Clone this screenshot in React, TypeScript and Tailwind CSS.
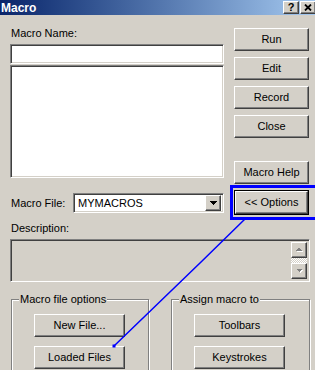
import React from "react";

const raised =
  "border border-t-white border-l-white border-r-[#404040] border-b-[#404040] shadow-[inset_-1px_-1px_0_#808080] bg-[#d4d0c8]";
const sunken =
  "border border-t-[#808080] border-l-[#808080] border-b-white border-r-white shadow-[inset_1px_1px_0_#404040,inset_-1px_-1px_0_#d4d0c8]";

function Btn({ label, className = "" }: { label: string; className?: string }) {
  return (
    <div className={`${raised} h-[23px] flex items-center justify-center ${className}`}>
      {label}
    </div>
  );
}

function UpArrow() {
  return (
    <svg width="9" height="6" viewBox="0 0 9 6" shapeRendering="crispEdges">
      <polygon points="1.5,5 8.5,5 5,1.5" fill="#ffffff" />
      <polygon points="0.5,4 7.5,4 4,0.5" fill="#808080" />
    </svg>
  );
}

function DownArrow() {
  return (
    <svg width="9" height="6" viewBox="0 0 9 6" shapeRendering="crispEdges">
      <polygon points="1.5,1.5 8.5,1.5 5,5" fill="#ffffff" />
      <polygon points="0.5,0.5 7.5,0.5 4,4" fill="#808080" />
    </svg>
  );
}

function Group({ title, a, b }: { title: string; a: string; b: string }) {
  return (
    <div className="border border-[#808080] shadow-[inset_1px_1px_0_#ffffff,1px_1px_0_#ffffff] h-[90px]">
      <div className="-mt-[7px] ml-[7px] px-[1px] w-fit bg-[#d4d0c8] leading-[13px]">{title}</div>
      <div className="pl-[22px] pt-[8px] flex flex-col gap-[9px]">
        <Btn label={a} className="w-[91px]" />
        <Btn label={b} className="w-[91px]" />
      </div>
    </div>
  );
}

export default function App() {
  return (
    <div className="relative w-[315px] h-[370px] overflow-hidden bg-[#d4d0c8] font-['Liberation_Sans',Arial,sans-serif] text-[11px] leading-[13px] text-black">
      {/* Title bar */}
      <div className="h-[15px] flex items-center bg-linear-to-r from-[#0a246a] to-[#a6caf0] pl-[1px]">
        <span className="text-white font-bold text-[12px] leading-none">Macro</span>
        <div className="ml-auto flex gap-[1px] -mr-[1px]">
          <div className={`${raised} w-[16px] h-[13px] flex items-center justify-center font-bold text-[11px] leading-none`}>?</div>
          <div className={`${raised} w-[16px] h-[13px] flex items-center justify-center`}>
            <svg width="8" height="7" viewBox="0 0 8 7">
              <path d="M1 0.5 L7 6.5 M7 0.5 L1 6.5" stroke="#000" strokeWidth="1.8" />
            </svg>
          </div>
        </div>
      </div>

      {/* Top section */}
      <div className="flex items-start pl-[10px]">
        <div className="w-[214px] pt-[12px]">
          <div className="pl-[1px] h-[13px]">Macro Name:</div>
          <div className={`${sunken} mt-[4px] h-[20px] bg-white`} />
          <div className={`${sunken} mt-[1px] h-[113px] bg-white`} />
          <div className="mt-[15px] flex items-center">
            <div className="w-[63px] pl-[1px]">Macro File:</div>
            <div className={`${sunken} w-[151px] h-[20px] bg-white flex items-center p-[2px]`}>
              <span className="flex-1 pl-[2px]">MYMACROS</span>
              <div className={`${raised} w-[16px] h-[16px] flex items-center justify-center`}>
                <svg width="7" height="4" viewBox="0 0 7 4" shapeRendering="crispEdges">
                  <polygon points="0,0 7,0 3.5,4" fill="#000" />
                </svg>
              </div>
            </div>
          </div>
        </div>
        <div className="ml-[10px] w-[75px] mt-[13px] flex flex-col">
          <Btn label="Run" />
          <Btn label="Edit" className="mt-[6px]" />
          <Btn label="Record" className="mt-[6px]" />
          <Btn label="Close" className="mt-[6px]" />
          <Btn label="Macro Help" className="mt-[23px]" />
          <div className="mt-[6px] border border-black">
            <Btn label="<< Options" className="h-[21px]" />
          </div>
        </div>
      </div>

      {/* Description */}
      <div className="mt-[7px] pl-[11px] h-[13px]">Description:</div>
      <div className={`${sunken} mt-[4px] ml-[10px] w-[300px] h-[43px] p-[2px] flex justify-end`}>
        <div className="w-[16px] flex flex-col">
          <div className={`${raised} h-[16px] flex items-center justify-center`}>
            <UpArrow />
          </div>
          <div className="flex-1 bg-[repeating-conic-gradient(#ffffff_0_25%,#d4d0c8_0_50%)] bg-[length:2px_2px]" />
          <div className={`${raised} h-[16px] flex items-center justify-center`}>
            <DownArrow />
          </div>
        </div>
      </div>

      {/* Groups */}
      <div className="mt-[17px] pl-[11px] flex gap-[22px]">
        <div className="w-[138px]">
          <Group title="Macro file options" a="New File..." b="Loaded Files" />
        </div>
        <div className="w-[139px]">
          <Group title="Assign macro to" a="Toolbars" b="Keystrokes" />
        </div>
      </div>

      {/* Annotation overlay */}
      <div className="absolute left-[230px] top-[185px] w-[95px] h-[35px] border-[3px] border-[#0000ff] pointer-events-none" />
      <svg className="absolute left-0 top-0 pointer-events-none" width="315" height="370">
        <polyline points="245,219 200,263 114,346" fill="none" stroke="#0000ff" strokeWidth="1.5" />
        <rect x="112.5" y="344.5" width="3" height="3" fill="#0000ff" />
      </svg>
    </div>
  );
}
